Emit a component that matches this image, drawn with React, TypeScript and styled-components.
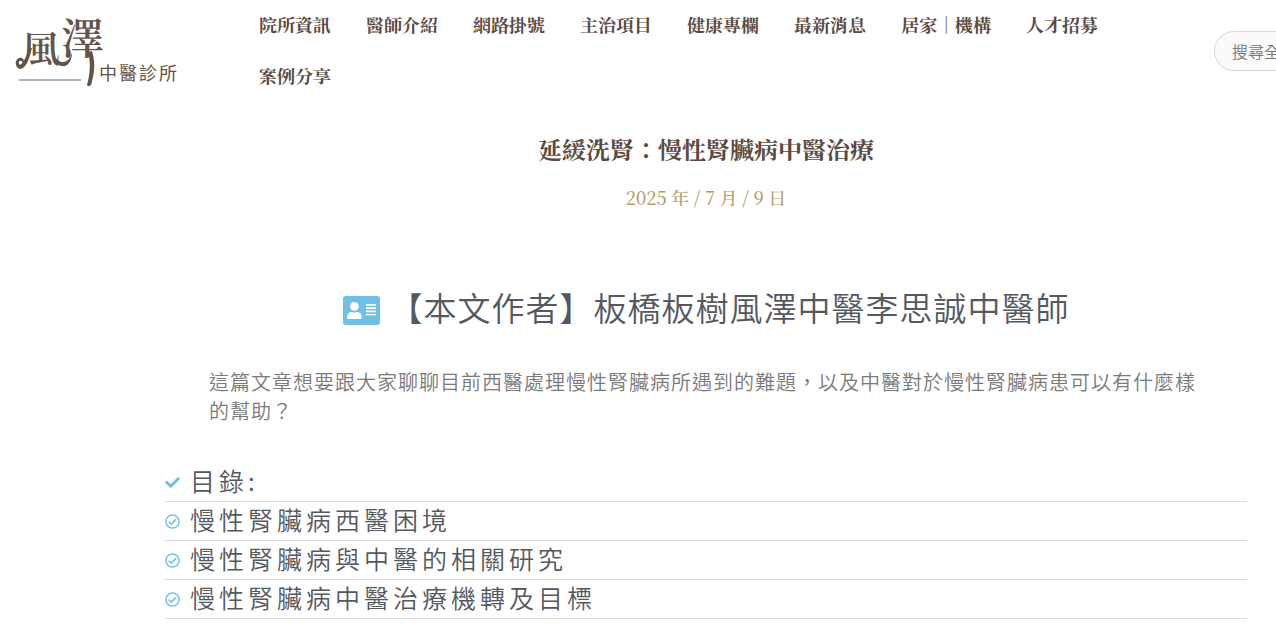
import React from "react";
import styled, { createGlobalStyle } from "styled-components";
import { FaCheck, FaRegCheckCircle } from "react-icons/fa";

const serif = `"Noto Serif TC", "Noto Serif CJK TC", "Liberation Serif", "Noto Sans CJK TC", serif`;
const sans = `"Noto Sans CJK TC", "Noto Sans", sans-serif`;

const GlobalStyle = createGlobalStyle`
  * { box-sizing: border-box; }
  body {
    margin: 0;
    background: #fff;
    font-family: ${sans};
    overflow-x: hidden;
  }
`;

const Header = styled.header`
  display: flex;
  align-items: flex-start;
  width: 100%;
  overflow: hidden;
`;

const LogoLink = styled.a`
  flex: none;
  display: block;
  width: 180px;
  height: 92px;
  margin-right: 62px;
  svg { display: block; }
`;

const Nav = styled.nav`
  flex: 1;
  min-width: 0;
  margin-right: 48px;
`;

const NavList = styled.ul`
  display: flex;
  flex-wrap: wrap;
  margin: 0;
  padding: 0;
  list-style: none;
`;

const NavLink = styled.a`
  display: block;
  padding: 0 18px 2px 17px;
  font: 700 18px/49px ${serif};
  color: #5b4a3f;
  text-decoration: none;
  white-space: nowrap;
`;

const Search = styled.form`
  flex: 0 0 62px;
  min-width: 0;
  padding-top: 31px;
`;

const SearchInput = styled.input`
  display: block;
  width: 220px;
  height: 40px;
  padding: 0 17px;
  border: 1px solid #d8d8d8;
  border-radius: 20px;
  background: #fafafa;
  font: 350 16px/24px ${sans};
  color: #777;
  &::placeholder { color: #777; opacity: 1; }
`;

const Article = styled.article`
  margin: 0 29px 0 165px;
`;

const Title = styled.h1`
  margin: 0;
  padding-top: 31px;
  text-align: center;
  font: 700 24px/32px ${serif};
  color: #5b4a3f;
`;

const PostDate = styled.time`
  display: block;
  margin-top: 18px;
  text-align: center;
  font: 500 18px/28px ${serif};
  color: #b59b6d;
`;

const Author = styled.h2`
  display: flex;
  align-items: center;
  justify-content: center;
  gap: 10px;
  margin: 74px 0 0;
  font: 350 33px/44px ${sans};
  letter-spacing: 1px;
  color: #54595f;
  svg { flex: none; }
`;

const AuthorName = styled.span`
  padding-bottom: 6px;
`;

const Intro = styled.p`
  margin: 32px 44px 0;
  font: 350 20px/29px ${sans};
  letter-spacing: 1px;
  color: #7a7a7a;
`;

const Contents = styled.ul`
  margin: 38px 0 0;
  padding: 0;
  list-style: none;
`;

const ContentsItem = styled.li`
  display: flex;
  align-items: center;
  gap: 10px;
  height: 39px;
  border-bottom: 1px solid #ddd;
  font: 350 25px/34px ${sans};
  letter-spacing: 4px;
  color: #54595f;
  svg { color: #6ec1e4; flex: none; }
`;

const ContentsLabel = styled.span`
  padding-bottom: 4px;
`;

const ContentsLink = styled.a`
  padding-bottom: 4px;
  color: inherit;
  text-decoration: none;
`;

const menu = ["院所資訊", "醫師介紹", "網路掛號", "主治項目", "健康專欄", "最新消息", "居家｜機構", "人才招募", "案例分享"];
const sections = ["慢性腎臟病西醫困境", "慢性腎臟病與中醫的相關研究", "慢性腎臟病中醫治療機轉及目標"];

function Logo() {
  return (
    <svg width="180" height="92" viewBox="0 0 180 92" role="img" aria-label="風澤中醫診所">
      <g fill="#65534a">
        <text x="22" y="63" fontSize="38" fontWeight="600" fontFamily={serif}>風</text>
        <text x="61" y="54" fontSize="43" fontWeight="600" fontFamily={serif}>澤</text>
        <text x="99" y="80" fontSize="18" letterSpacing="2" fontFamily={sans}>中醫診所</text>
      </g>
      <g fill="#65534a">
        <path d="M32 48C29 59 26 69 20 69C15 68 14 60 19 58C23 57 25 60 23 63C22 60 18 60 19 64C21 67 26 59 29 48Z" />
        <path d="M57 59C62 65 69 62 72 53C72 63 65 71 56 63Z" />
        <path d="M88 52C91 62 90 75 87 85C89 88 92 85 92 81C95 70 95 61 92 51Z" />
      </g>
      <path d="M19 80H81" stroke="#b5b1ae" strokeWidth="2" />
    </svg>
  );
}

function ContactCardIcon() {
  return (
    <svg width="37" height="29" viewBox="0 0 37 29" aria-hidden="true">
      <rect width="37" height="29" rx="3" fill="#6ec1e4" />
      <g fill="#fff">
        <circle cx="11.4" cy="10.4" r="4.3" />
        <path d="M4.2 22v-1.6c0-2.5 2-4.3 4.4-4.3 1 .6 4.6.6 5.6 0 2.4 0 4.4 1.8 4.4 4.3V22c0 .6-.5 1-1 1H5.200c-.6 0-1-.4-1-1Z" />
        <path d="M23 8h10v1.700H23zM23 11.300h10V13H23zM23 14.600h10v1.700H23zM23 17.900h10v1.300H23z" />
      </g>
    </svg>
  );
}

export default function App() {
  return (
    <>
      <GlobalStyle />
      <Header>
        <LogoLink href="#"><Logo /></LogoLink>
        <Nav>
          <NavList>
            {menu.map((m) => <li key={m}><NavLink href="#">{m}</NavLink></li>)}
          </NavList>
        </Nav>
        <Search role="search">
          <SearchInput type="search" aria-label="搜尋全站" placeholder="搜尋全站" />
        </Search>
      </Header>
      <Article>
        <Title>延緩洗腎：慢性腎臟病中醫治療</Title>
        <PostDate dateTime="2025-07-09">2025 年 / 7 月 / 9 日</PostDate>
        <Author>
          <ContactCardIcon />
          <AuthorName>【本文作者】板橋板樹風澤中醫李思誠中醫師</AuthorName>
        </Author>
        <Intro>這篇文章想要跟大家聊聊目前西醫處理慢性腎臟病所遇到的難題，以及中醫對於慢性腎臟病患可以有什麼樣的幫助？</Intro>
        <Contents>
          <ContentsItem><FaCheck size={15} /><ContentsLabel>目錄:</ContentsLabel></ContentsItem>
          {sections.map((s) => (
            <ContentsItem key={s}><FaRegCheckCircle size={15} /><ContentsLink href="#">{s}</ContentsLink></ContentsItem>
          ))}
        </Contents>
      </Article>
    </>
  );
}
